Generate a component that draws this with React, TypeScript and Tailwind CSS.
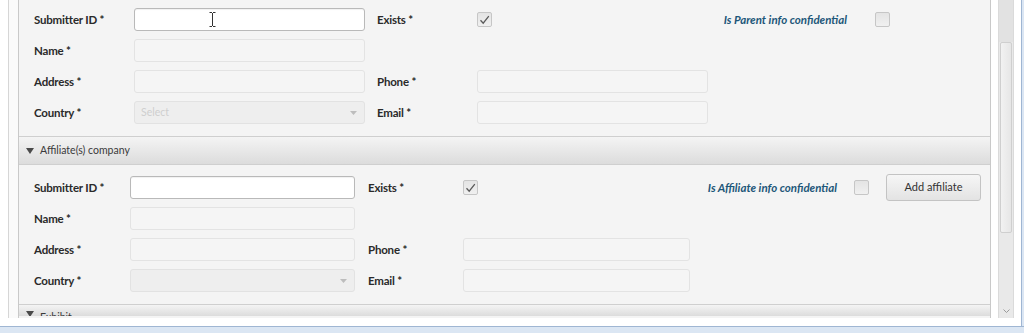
import React from "react";

const labelCls = "text-[11.5px] font-bold text-[#2a2a2a] tracking-[-0.2px]";

function Label({ w, children, ml = 0 }: { w: number; children: React.ReactNode; ml?: number }) {
  return (
    <div className={labelCls} style={{ width: w, marginLeft: ml }}>
      {children}
    </div>
  );
}

function TextInput({ w, enabled, cursor }: { w: number; enabled?: boolean; cursor?: boolean }) {
  return (
    <div
      className={
        enabled
          ? "relative h-[23px] rounded-[3px] border border-[#b9b9b9] bg-white shadow-[inset_0_1px_1px_rgba(0,0,0,0.06)]"
          : "relative h-[23px] rounded-[3px] border border-[#e3e3e3] bg-[#f5f5f5]"
      }
      style={{ width: w }}
    >
      {cursor && (
        <svg className="absolute left-[74px] top-[3px]" width="7" height="15" viewBox="0 0 7 15">
          <path d="M0.5 0.5h2.5M4 0.5h2.5M3.5 1v13M0.5 14.5h2.5M4 14.5h2.5" stroke="#333" strokeWidth="1" fill="none" />
        </svg>
      )}
    </div>
  );
}

function SelectBox({ w, placeholder }: { w: number; placeholder?: string }) {
  return (
    <div
      className="flex h-[23px] items-center justify-between rounded-[3px] border border-[#e2e2e2] bg-[#eeeeee] pl-[6px] pr-[7px]"
      style={{ width: w }}
    >
      <span className="text-[10.5px] text-[#cfcfcf]">{placeholder ?? ""}</span>
      <svg width="7" height="4" viewBox="0 0 7 4">
        <path d="M0 0h7L3.5 4z" fill="#bdbdbd" />
      </svg>
    </div>
  );
}

function CheckBox({ checked }: { checked?: boolean }) {
  return (
    <div className="flex h-[15px] w-[15px] items-center justify-center rounded-[2px] border border-[#c6c6c6] bg-gradient-to-b from-[#e4e4e4] to-[#f0f0f0]">
      {checked && (
        <svg width="11" height="10" viewBox="0 0 11 10">
          <path d="M1.5 5.2L4.2 8.2L9.8 1.2" stroke="#5a5a5a" strokeWidth="1.3" fill="none" />
        </svg>
      )}
    </div>
  );
}

function SectionHeader({ title, clipped }: { title: string; clipped?: boolean }) {
  return (
    <div
      className={
        "flex items-center gap-[6px] border-t border-[#cfcfcf] bg-gradient-to-b from-[#f4f4f4] to-[#dcdcdc] pl-[7px] " +
        (clipped ? "h-[12px] items-start pt-[6px] overflow-hidden" : "h-[29px] border-b border-[#c9c9c9]")
      }
    >
      <svg width="8" height="6" viewBox="0 0 8 6" className="shrink-0">
        <path d="M0 0h8L4 6z" fill="#4a4a4a" />
      </svg>
      <span className="text-[10.5px] leading-[13px] text-[#3a3a3a]">{title}</span>
    </div>
  );
}

export default function App() {
  return (
    <div className="flex h-[333px] w-[1024px] flex-col overflow-hidden bg-white font-['Lato',sans-serif]">
      <div className="flex h-[326px]">
        {/* left window gutter */}
        <div className="w-[8px] shrink-0 bg-white" />
        <div className="flex h-[318px] w-[10px] shrink-0 border-l border-[#d6d6d6] bg-[#fafafa]" />
        {/* main panel */}
        <div className="flex h-[318px] w-[973px] shrink-0 flex-col border-x border-[#c9c9c9] bg-[#f4f4f4]">
          {/* Section 1 */}
          <div className="flex flex-col gap-[8px] pb-[12px] pl-[15px] pt-[8px]">
            <div className="flex items-center">
              <Label w={100}>Submitter ID *</Label>
              <TextInput w={231} enabled cursor />
              <Label w={100} ml={12}>Exists *</Label>
              <div className="w-[231px]">
                <CheckBox checked />
              </div>
              <div className="w-[167px] pr-[28px] text-right text-[11.5px] font-bold italic text-[#1d5779]">
                Is Parent info confidential
              </div>
              <CheckBox />
            </div>
            <div className="flex items-center">
              <Label w={100}>Name *</Label>
              <TextInput w={231} />
            </div>
            <div className="flex items-center">
              <Label w={100}>Address *</Label>
              <TextInput w={231} />
              <Label w={100} ml={12}>Phone *</Label>
              <TextInput w={231} />
            </div>
            <div className="flex items-center">
              <Label w={100}>Country *</Label>
              <SelectBox w={231} placeholder="Select" />
              <Label w={100} ml={12}>Email *</Label>
              <TextInput w={231} />
            </div>
          </div>

          <SectionHeader title="Affiliate(s) company" />

          {/* Section 2 */}
          <div className="flex flex-col gap-[8px] pb-[12px] pl-[15px] pt-[11px]">
            <div className="flex h-[23px] items-center">
              <Label w={96}>Submitter ID *</Label>
              <TextInput w={225} enabled />
              <Label w={95} ml={13}>Exists *</Label>
              <div className="w-[227px]">
                <CheckBox checked />
              </div>
              <div className="w-[164px] pr-[17px] text-right text-[11.5px] font-bold italic text-[#1d5779]">
                Is Affiliate info confidential
              </div>
              <CheckBox />
              <button className="ml-[17px] flex h-[27px] w-[95px] items-center justify-center rounded-[3px] border border-[#c3c3c3] bg-gradient-to-b from-[#f6f6f6] to-[#e3e3e3] text-[11px] text-[#333]">
                Add affiliate
              </button>
            </div>
            <div className="flex items-center">
              <Label w={96}>Name *</Label>
              <TextInput w={225} />
            </div>
            <div className="flex items-center">
              <Label w={96}>Address *</Label>
              <TextInput w={225} />
              <Label w={95} ml={13}>Phone *</Label>
              <TextInput w={227} />
            </div>
            <div className="flex items-center">
              <Label w={96}>Country *</Label>
              <SelectBox w={225} />
              <Label w={95} ml={13}>Email *</Label>
              <TextInput w={227} />
            </div>
          </div>

          <SectionHeader title="Exhibit" clipped />
        </div>

        {/* gap + scrollbar */}
        <div className="h-[318px] w-[7px] shrink-0 bg-white" />
        <div className="relative flex h-[318px] w-[16px] shrink-0 flex-col border-x border-[#dadada] bg-[#e9e9e9]">
          <div className="h-[42px] bg-[#e2e2e2]" />
          <div className="mx-[1px] h-[191px] rounded-[2px] border border-[#cfcfcf] bg-gradient-to-r from-[#f2f2f2] to-[#e6e6e6]" />
          <div className="flex-1" />
          <div className="flex h-[12px] items-center justify-center pb-[2px]">
            <svg width="7" height="4" viewBox="0 0 7 4">
              <path d="M0.5 0.5L3.5 3.5L6.5 0.5" stroke="#9a9a9a" strokeWidth="1" fill="none" />
            </svg>
          </div>
        </div>
        <div className="h-[326px] w-[7px] shrink-0 bg-white" />
        <div className="h-[326px] flex-1 border-l border-[#9fb6d3] bg-[#dbe6f3]" />
      </div>
      <div className="flex-1 border-t border-[#9fb6d3] bg-[#dbe6f3]" />
    </div>
  );
}
